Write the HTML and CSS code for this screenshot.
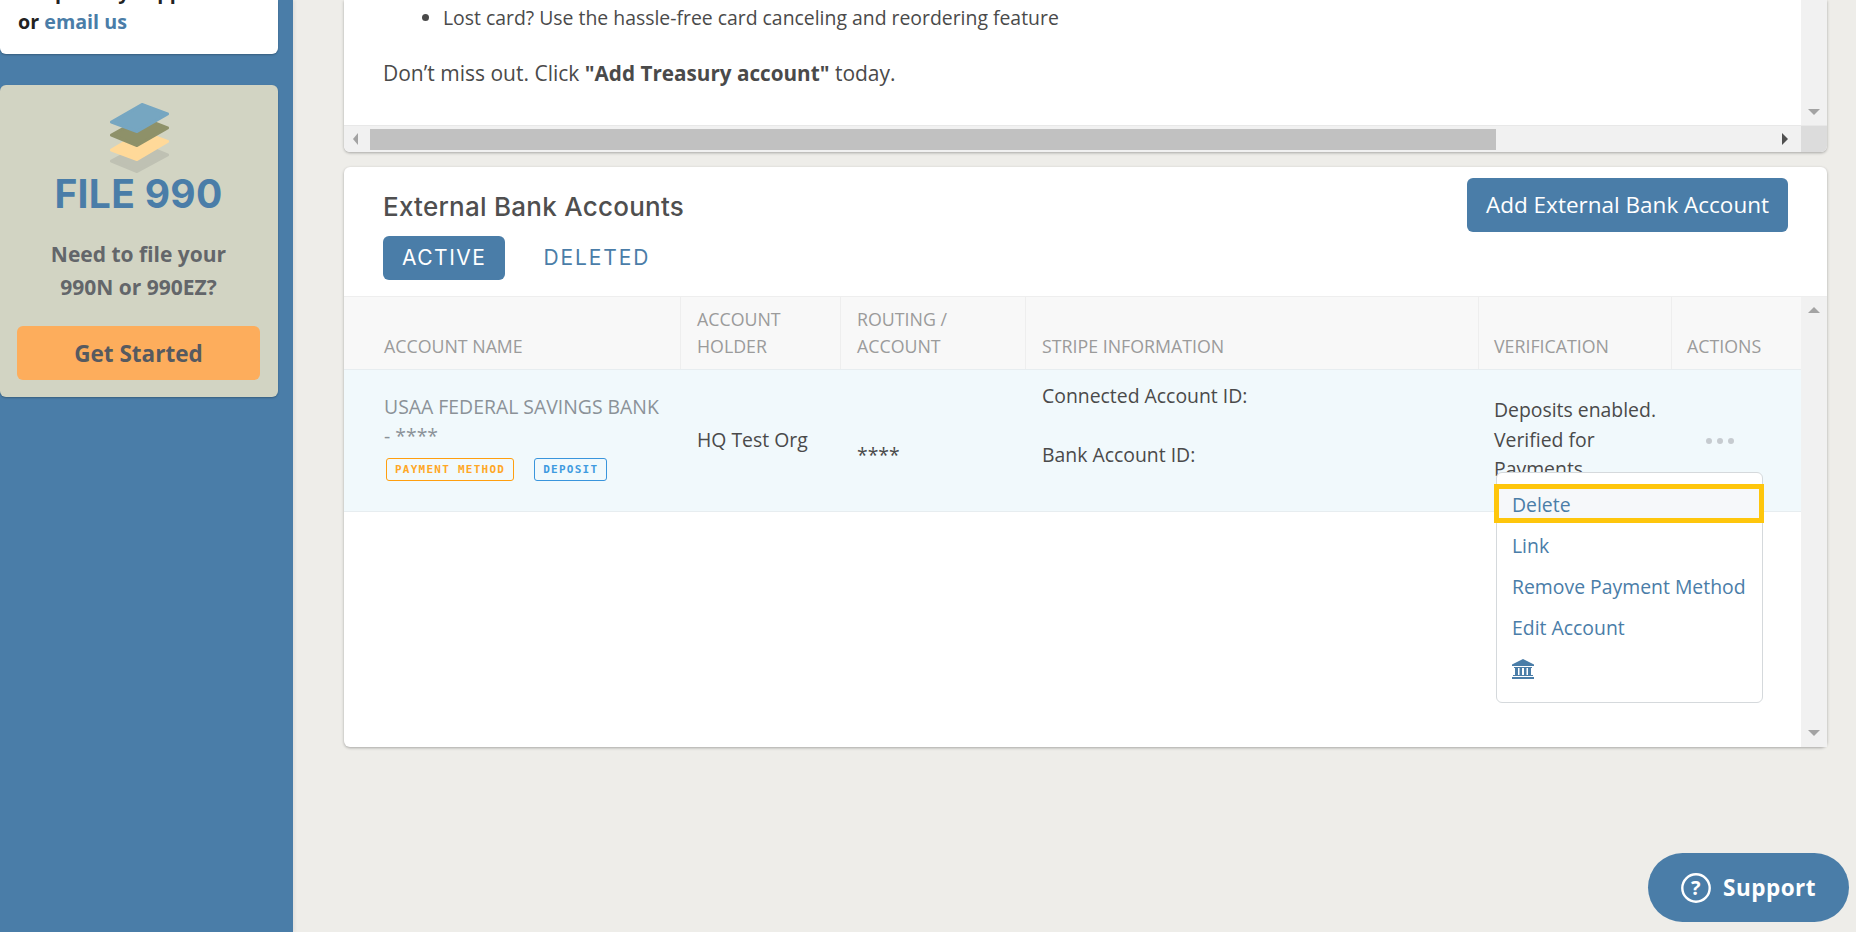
FILE: index.html
```html
<!DOCTYPE html>
<html lang="en">
<head>
<meta charset="utf-8">
<title>External Bank Accounts</title>
<link rel="stylesheet" href="styles.css">
</head>
<body>
<div class="app">
  <aside class="sidebar">
    <div class="help-card"><p>For priority support<br>or <a class="help-link">email us</a></p></div>
    <div class="promo">
      <svg class="promo-icon" width="60" height="70" viewBox="0 0 60 70">
        <path d="M33 41.5 L58.5 52 L28 68.5 L2.5 58 Z" fill="#bfc1b3" stroke="#bfc1b3" stroke-width="3" stroke-linejoin="round"/>
        <path d="M33 29 L58.5 38.5 L28 56.5 L2.5 47 Z" fill="#ffd999" stroke="#ffd999" stroke-width="3" stroke-linejoin="round"/>
        <path d="M33 15 L58.5 25 L28 42.5 L2.5 32 Z" fill="#8e9169" stroke="#8e9169" stroke-width="3" stroke-linejoin="round"/>
        <path d="M33 1.5 L58.5 11 L28 28.5 L2.5 19 Z" fill="#76a6c1" stroke="#76a6c1" stroke-width="3" stroke-linejoin="round"/>
      </svg>
      <h2 class="promo-title">FILE 990</h2>
      <p class="promo-text">Need to file your<br>990N or 990EZ?</p>
      <a class="promo-btn">Get Started</a>
    </div>
  </aside>
  <main class="main">
    <section class="card card-notice">
      <div class="notice-body">
        <div class="notice-text">
          <ul class="notice-list">
            <li>Get spending limits on all of the cards and instant transfers for free every</li>
            <li>Lost card? Use the hassle-free card canceling and reordering feature</li>
          </ul>
          <p class="notice-cta">Don’t miss out. Click <strong class="notice-strong">"Add Treasury account"</strong> today.</p>
        </div>
        <div class="vbar vbar-notice"><span class="arrow-down"></span></div>
      </div>
      <div class="hbar">
        <div class="hbar-track">
          <span class="arrow-left"></span>
          <div class="hbar-thumb"></div>
          <span class="arrow-right"></span>
        </div>
        <div class="hbar-corner"></div>
      </div>
    </section>

    <section class="card card-accounts">
      <header class="accounts-head">
        <div class="accounts-titles">
          <h1 class="accounts-title">External Bank Accounts</h1>
          <nav class="tabs">
            <a class="tab tab-active">ACTIVE</a>
            <a class="tab">DELETED</a>
          </nav>
        </div>
        <a class="add-btn">Add External Bank Account</a>
      </header>
      <div class="table-wrap">
        <div class="table-area">
          <div class="row row-head">
            <div class="cell c1">ACCOUNT NAME</div>
            <div class="cell c2">ACCOUNT HOLDER</div>
            <div class="cell c3">ROUTING / ACCOUNT</div>
            <div class="cell c4">STRIPE INFORMATION</div>
            <div class="cell c5">VERIFICATION</div>
            <div class="cell c6">ACTIONS</div>
          </div>
          <div class="row row-body">
            <div class="cell c1 name-cell">
              <div class="bank-name">USAA FEDERAL SAVINGS BANK<br>- ****</div>
              <div class="badges">
                <span class="badge badge-orange">PAYMENT METHOD</span>
                <span class="badge badge-blue">DEPOSIT</span>
              </div>
            </div>
            <div class="cell c2 holder-cell">HQ Test Org</div>
            <div class="cell c3 routing-cell">****</div>
            <div class="cell c4 stripe-cell">
              <div>Connected Account ID:</div>
              <div>Bank Account ID:</div>
            </div>
            <div class="cell c5 verify-cell">Deposits enabled. Verified for Payments</div>
            <div class="cell c6 actions-cell"><span class="dots"><i></i><i></i><i></i></span></div>
          </div>
          <ul class="menu">
            <li class="menu-item menu-item-focus">Delete</li>
            <li class="menu-item">Link</li>
            <li class="menu-item">Remove Payment Method</li>
            <li class="menu-item">Edit Account</li>
            <li class="menu-item menu-icon">
              <svg width="22" height="20" viewBox="0 0 22 20">
                <path d="M11 0 L22 5.5 V7 H0 V5.5 Z" fill="#4a7da8"/>
                <path d="M2 8 H20 V9 H2 Z M1 16 H21 V17 H1 Z M0 18 H22 V20 H0 Z" fill="#4a7da8"/>
                <path d="M3 9 H6 V16 H3 Z M7.5 9 H10 V16 H7.5 Z M12 9 H14.5 V16 H12 Z M16 9 H19 V16 H16 Z" fill="#4a7da8"/>
              </svg>
            </li>
          </ul>
        </div>
        <div class="vbar vbar-table"><span class="arrow-up"></span><span class="arrow-down"></span></div>
      </div>
    </section>
  </main>
  <a class="support">
    <svg width="30" height="30" viewBox="0 0 30 30">
      <circle cx="15" cy="15" r="13.7" fill="none" stroke="#fff" stroke-width="2.4"/>
      <text x="15" y="22" text-anchor="middle" class="support-q">?</text>
    </svg>
    <span>Support</span>
  </a>
</div>
</body>
</html>
```
FILE: styles.css
```css
* { box-sizing: border-box; }
html, body { margin: 0; padding: 0; height: 100%; overflow: hidden; }
body { font-family: "Open Sans", "Liberation Sans", sans-serif; color: #4a4a4a; background: #eeede9; }
p, h1, h2, ul { margin: 0; padding: 0; }
.app { display: flex; height: 932px; width: 1856px; overflow: hidden; }

.sidebar { flex: 0 0 293px; background: #4a7da8; padding-right: 15px; box-shadow: 2px 0 3px rgba(0,0,0,.06); }
.help-card { height: 54px; background: #fff; border-radius: 0 0 6px 6px; box-shadow: 0 1px 2px rgba(0,0,0,.25); padding-left: 18px; overflow: hidden; display: flex; align-items: flex-end; }
.help-card p { font-size: 19.7px; font-weight: 700; line-height: 30px; color: #222; padding-bottom: 17px; white-space: nowrap; }
.help-link { color: #4a7da8; font-weight: 700; }
.promo { margin-top: 31px; height: 312px; background: #d2d4c3; border-radius: 6px; box-shadow: 0 1px 2px rgba(0,0,0,.25); display: flex; flex-direction: column; align-items: center; padding: 18px 18px 0 17px; }
.promo-icon { display: block; flex: none; }
.promo-title { font-family: "Inter", "Open Sans", sans-serif; font-size: 39px; line-height: 40px; font-weight: 700; color: #4a7da8; margin-top: 1px; letter-spacing: .3px; }
.promo-text { font-size: 21px; line-height: 33px; font-weight: 700; color: #63666a; text-align: center; margin-top: 24px; }
.promo-btn { margin-top: 22px; align-self: stretch; height: 54px; background: #fdad5c; border-radius: 6px; display: flex; align-items: center; justify-content: center; font-size: 22.5px; font-weight: 700; color: #565a60; }

.main { flex: 1; display: flex; flex-direction: column; padding: 0 29px 0 51px; gap: 15px; }
.card { background: #fff; border-radius: 6px; box-shadow: 0 1px 3px rgba(0,0,0,.3); flex: none; }
.card-notice { height: 152px; border-radius: 0 0 6px 6px; display: flex; flex-direction: column; overflow: hidden; }
.notice-body { flex: 1; min-height: 0; display: flex; overflow: hidden; }
.notice-text { flex: 1; min-width: 0; padding-left: 39px; font-size: 19.4px; line-height: 32px; color: #4a4a4a; font-weight: 400; overflow: hidden; white-space: nowrap; }
.notice-list { margin-top: -30px; padding-left: 60px; }
.notice-cta { margin-top: 23px; font-size: 21px; }
.notice-strong { font-size: 20.7px; }
.vbar { flex: 0 0 26px; background: #f1f1f1; display: flex; flex-direction: column; align-items: center; }
.vbar-notice { justify-content: flex-end; padding-bottom: 10px; }
.vbar-table { justify-content: space-between; padding: 10px 0 11px; }
.arrow-down { width: 0; height: 0; border: 6px solid transparent; border-top: 6px solid #a3a3a3; border-bottom: 0; }
.arrow-up { width: 0; height: 0; border: 6px solid transparent; border-bottom: 6px solid #a3a3a3; border-top: 0; }
.hbar { flex: 0 0 27px; display: flex; border-top: 1px solid #e8e8e8; }
.hbar-track { flex: 1; background: #f1f1f1; display: flex; align-items: center; padding: 0 13px 0 9px; }
.arrow-left { width: 0; height: 0; border: 6px solid transparent; border-right: 5px solid #a3a3a3; border-left: 0; }
.hbar-thumb { width: 1126px; height: 21px; background: #c1c1c1; margin-left: 12px; }
.arrow-right { width: 0; height: 0; border: 6px solid transparent; border-left: 6px solid #505050; border-right: 0; margin-left: auto; }
.hbar-corner { flex: 0 0 26px; background: #dcdcdc; }

.card-accounts { height: 580px; display: flex; flex-direction: column; }
.accounts-head { flex: 0 0 129px; display: flex; justify-content: space-between; align-items: flex-start; padding: 11px 39px 0 39px; }
.accounts-titles { display: flex; flex-direction: column; }
.accounts-title { font-family: "Inter", "Open Sans", sans-serif; font-size: 26px; line-height: 32px; font-weight: 500; color: #4f4f4f; margin-top: 13px; letter-spacing: .25px; }
.tabs { display: flex; gap: 38px; margin-top: 13px; align-items: center; }
.tab { font-family: "Inter", "Open Sans", sans-serif; font-size: 21px; letter-spacing: 1.9px; color: #4a7da8; line-height: 44px; }
.tab-active { background: #4a7da8; color: #fff; border-radius: 6px; padding: 0 19px; height: 44px; letter-spacing: 1.5px; }
.add-btn { background: #4a7da8; color: #fff; font-size: 22.5px; line-height: 54px; height: 54px; padding: 0 19px; border-radius: 6px; }

.table-wrap { flex: 1; min-height: 0; display: flex; border-top: 1px solid #eeeeee; }
.table-area { flex: 1; min-width: 0; position: relative; }
.row { display: flex; }
.row-head { height: 73px; background: #f8f8f8; border-bottom: 1px solid #e7edf0; font-size: 17.8px; line-height: 27px; color: #9b9b9b; font-weight: 400; }
.row-head .cell { display: flex; align-items: flex-end; padding: 0 15px 9px 16px; border-right: 1px solid #eeeeee; }
.row-head .c1 { padding-left: 40px; }
.row-head .c5, .row-head .c6 { padding-left: 15px; }
.row-head .c6 { border-right: 0; }
.c1 { flex: 0 0 337px; }
.c2 { flex: 0 0 160px; }
.c3 { flex: 0 0 185px; }
.c4 { flex: 0 0 453px; }
.c5 { flex: 0 0 193px; }
.c6 { flex: 1; }
.row-body { height: 142px; background: #f1f9fc; border-bottom: 1px solid #e7edf0; font-size: 19.4px; color: #4a4a4a; }
.row-body .cell { padding: 0 15px 0 16px; }
.row-body .verify-cell { padding-left: 15px; }
.row-body .actions-cell { padding-left: 15px; }
.row-body .name-cell { padding-left: 40px; padding-top: 22px; }
.bank-name { color: #8b9298; font-size: 19.4px; line-height: 29px; white-space: nowrap; }
.badges { display: flex; gap: 20px; margin-top: 8px; margin-left: 2px; }
.badge { font-family: "DejaVu Sans Mono", "Liberation Mono", monospace; font-size: 11px; line-height: 21px; height: 23px; padding: 0 8px; border: 1px solid; border-radius: 3px; letter-spacing: 1.25px; font-weight: 700; white-space: nowrap; }
.badge-orange { color: #ffa726; border-color: #ff9f0f; }
.badge-blue { color: #3f9be0; border-color: #3a95dc; }
.row-body .holder-cell { padding-top: 54px; line-height: 32px; }
.row-body .routing-cell { padding-top: 69px; line-height: 32px; }
.row-body .stripe-cell { padding-top: 10px; line-height: 32px; display: flex; flex-direction: column; gap: 27px; }
.row-body .verify-cell { padding-top: 25px; line-height: 29.5px; }
.row-body .actions-cell { padding-top: 68px; }
.dots { display: flex; gap: 5px; margin-left: 19px; }
.dots i { width: 6px; height: 6px; border-radius: 50%; background: #c6cbd0; display: block; }

.menu { position: absolute; left: 1152px; top: 175px; width: 267px; height: 231px; background: #fff; border: 1px solid #d5d9dc; border-radius: 6px; list-style: none; padding: 11px 0 0; margin: 0; color: #4a7da8; font-size: 19.4px; }
.menu-item { height: 41px; line-height: 41px; padding-left: 15px; }
.menu-item-focus { height: 39px; line-height: 31px; margin: 0 -2px 2px -3px; padding-left: 13px; background: #f6f8fa; border: 5px solid #fec60c; }
.menu-icon { height: 34px; line-height: 0; padding-top: 11px; padding-left: 15px; }

.support { position: absolute; left: 1648px; top: 853px; width: 201px; height: 69px; background: #4a7da8; border-radius: 35px; color: #fff; display: flex; align-items: center; padding-left: 33px; gap: 12px; font-size: 22.5px; font-weight: 700; letter-spacing: .5px; line-height: 66px; }
.support-q { font-family: "Open Sans", sans-serif; font-size: 20px; font-weight: 700; fill: #fff; }
```
